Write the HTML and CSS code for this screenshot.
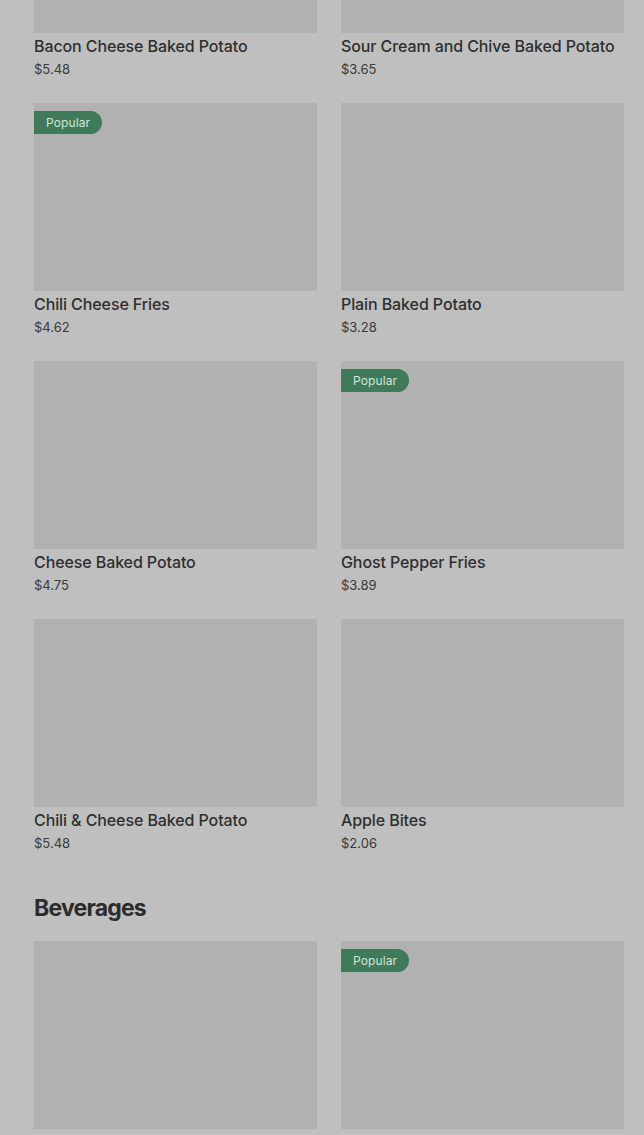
FILE: index.html
```html
<!DOCTYPE html>
<html>
<head>
<meta charset="utf-8">
<link rel="stylesheet" href="styles.css">
</head>
<body>
<main class="menu">
  <section class="section">
    <div class="grid">
      <div class="card"><div class="thumb"></div><div class="name">Bacon Cheese Baked Potato</div><div class="price">$5.48</div></div>
      <div class="card"><div class="thumb"></div><div class="name">Sour Cream and Chive Baked Potato</div><div class="price">$3.65</div></div>
      <div class="card"><div class="thumb"><span class="badge">Popular</span></div><div class="name">Chili Cheese Fries</div><div class="price">$4.62</div></div>
      <div class="card"><div class="thumb"></div><div class="name">Plain Baked Potato</div><div class="price">$3.28</div></div>
      <div class="card"><div class="thumb"></div><div class="name">Cheese Baked Potato</div><div class="price">$4.75</div></div>
      <div class="card"><div class="thumb"><span class="badge">Popular</span></div><div class="name">Ghost Pepper Fries</div><div class="price">$3.89</div></div>
      <div class="card"><div class="thumb"></div><div class="name">Chili &amp; Cheese Baked Potato</div><div class="price">$5.48</div></div>
      <div class="card"><div class="thumb"></div><div class="name">Apple Bites</div><div class="price">$2.06</div></div>
    </div>
  </section>
  <section class="section">
    <h2 class="heading">Beverages</h2>
    <div class="grid">
      <div class="card"><div class="thumb"></div></div>
      <div class="card"><div class="thumb"><span class="badge">Popular</span></div></div>
    </div>
  </section>
</main>
</body>
</html>
```
FILE: styles.css
```css
html, body {
  margin: 0;
  padding: 0;
  background: #bfbfbf;
  overflow: hidden;
}
body {
  font-family: Inter, "Liberation Sans", sans-serif;
  color: #2e2e2e;
}
.menu {
  padding: 0 20px 0 34px;
  margin-top: -155px;
}
.grid {
  display: grid;
  grid-template-columns: 283px 283px;
  column-gap: 24px;
  row-gap: 25px;
}
.thumb {
  position: relative;
  height: 188px;
  background: #b1b1b1;
}
.badge {
  position: absolute;
  top: 8px;
  left: 0;
  height: 23px;
  line-height: 23px;
  padding: 0 12px;
  background: #3f7b5a;
  color: #d4e4d9;
  font-size: 12px;
  letter-spacing: 0.1px;
  border-radius: 0 12px 12px 0;
}
.name {
  margin-top: 3px;
  font-size: 16px;
  line-height: 20px;
  font-weight: 500;
  letter-spacing: -0.1px;
  color: #2f2f2f;
  white-space: nowrap;
}
.price {
  margin-top: 4px;
  font-size: 13px;
  line-height: 18px;
  color: #3a3a3a;
}
.heading {
  margin: 40px 0 17px;
  font-family: Inter, "Liberation Sans", sans-serif;
  font-size: 23px;
  line-height: 32px;
  font-weight: 700;
  letter-spacing: -0.8px;
  color: #2c2c2c;
}
```
